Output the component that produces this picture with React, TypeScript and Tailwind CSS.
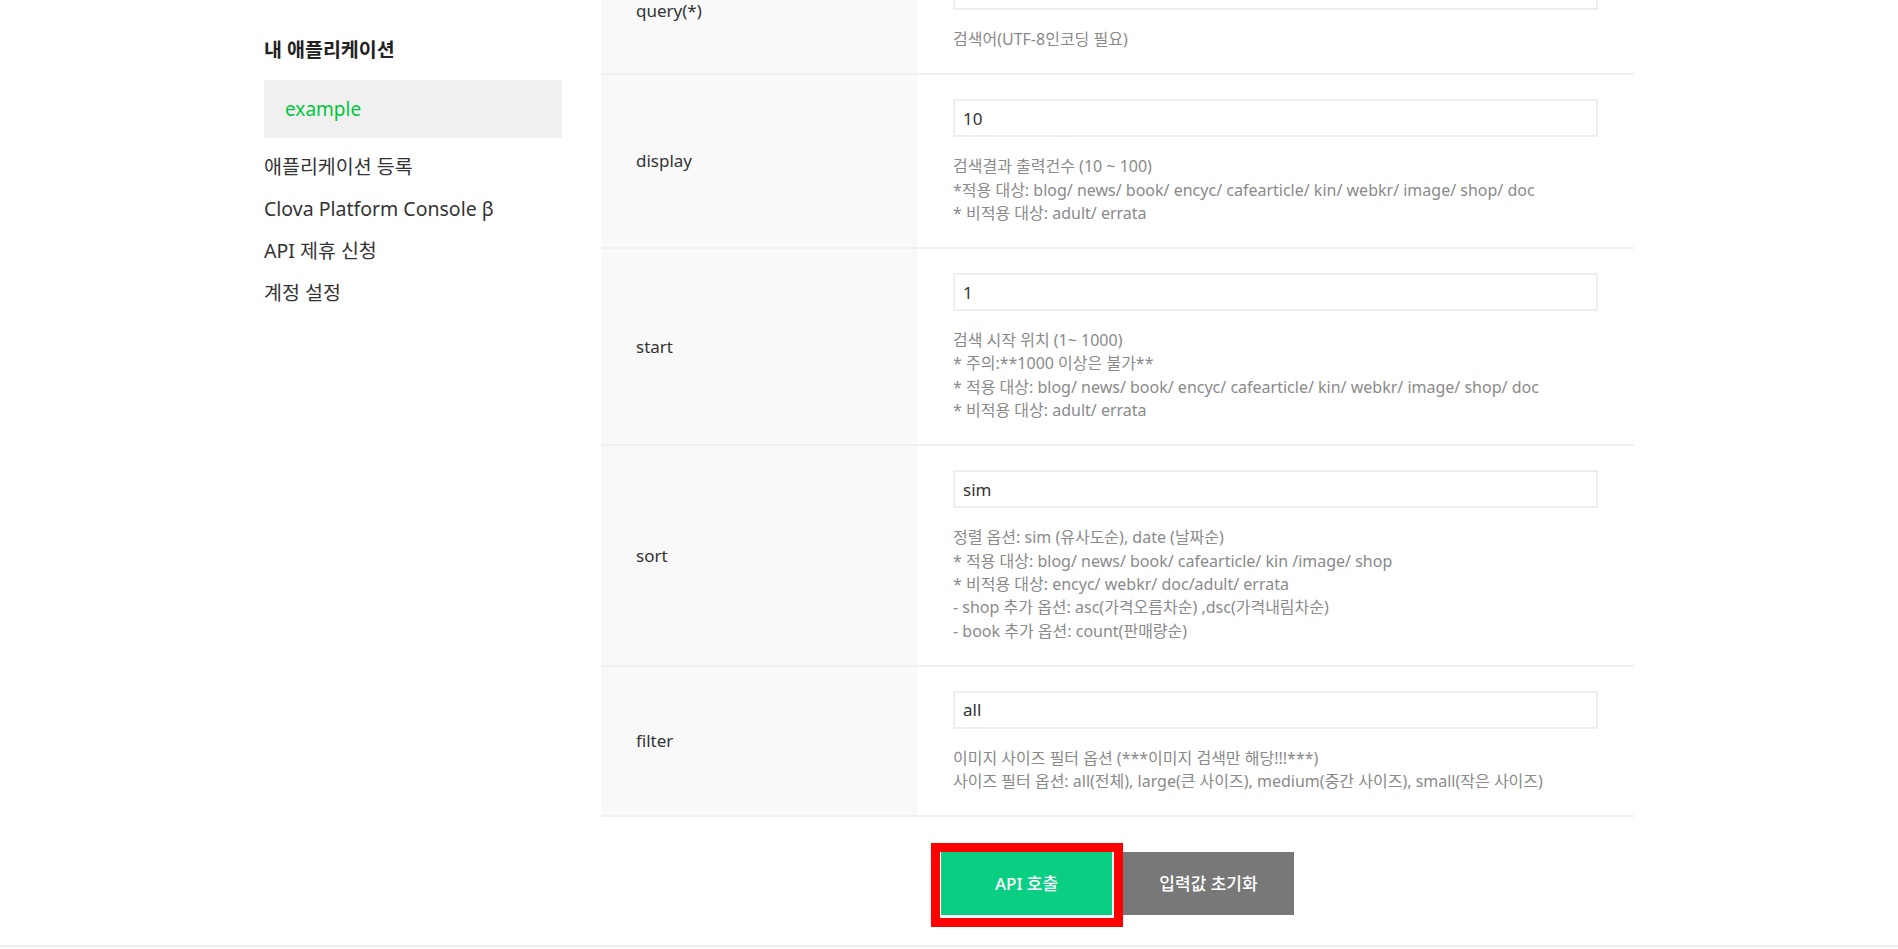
import React from 'react';

const font = "font-['Noto_Sans','Noto_Sans_CJK_KR',sans-serif]";

const menuItems = ['애플리케이션 등록', 'Clova Platform Console β', 'API 제휴 신청', '계정 설정'];

const params = [
  { name: 'query(*)', value: '', desc: ['검색어(UTF-8인코딩 필요)'] },
  {
    name: 'display',
    value: '10',
    desc: [
      '검색결과 출력건수 (10 ~ 100)',
      '*적용 대상: blog/ news/ book/ encyc/ cafearticle/ kin/ webkr/ image/ shop/ doc',
      '* 비적용 대상: adult/ errata',
    ],
  },
  {
    name: 'start',
    value: '1',
    desc: [
      '검색 시작 위치 (1~ 1000)',
      '* 주의:**1000 이상은 불가**',
      '* 적용 대상: blog/ news/ book/ encyc/ cafearticle/ kin/ webkr/ image/ shop/ doc',
      '* 비적용 대상: adult/ errata',
    ],
  },
  {
    name: 'sort',
    value: 'sim',
    desc: [
      '정렬 옵션: sim (유사도순), date (날짜순)',
      '* 적용 대상: blog/ news/ book/ cafearticle/ kin /image/ shop',
      '* 비적용 대상: encyc/ webkr/ doc/adult/ errata',
      '- shop 추가 옵션: asc(가격오름차순) ,dsc(가격내림차순)',
      '- book 추가 옵션: count(판매량순)',
    ],
  },
  {
    name: 'filter',
    value: 'all',
    desc: [
      '이미지 사이즈 필터 옵션 (***이미지 검색만 해당!!!***)',
      '사이즈 필터 옵션: all(전체), large(큰 사이즈), medium(중간 사이즈), small(작은 사이즈)',
    ],
  },
];

const Sidebar = () => (
  <aside className="w-[298px] shrink-0 pt-[37px]">
    <h2 className="text-[19.5px] leading-[26px] font-bold text-[#222]">내 애플리케이션</h2>
    <div className="mt-[17px] h-[58px] bg-[#f0f0f0] flex items-center px-[21px]">
      <span className="text-[19px] text-[#00c73c]">example</span>
    </div>
    <ul className="mt-[8px]">
      {menuItems.map((item) => (
        <li key={item} className="h-[42px] flex items-center text-[19.5px] text-[#333]">
          {item}
        </li>
      ))}
    </ul>
  </aside>
);

const ParamRow = ({ name, value, desc }: { name: string; value: string; desc: string[] }) => (
  <div className="flex border-b-2 border-[#f0f0f0]">
    <div className="w-[316px] shrink-0 bg-[#f9f9f9] flex items-center pl-[35px] text-[17px] text-[#333]">
      {name}
    </div>
    <div className="flex-1 px-9 pt-6 pb-[22px]">
      <input
        readOnly
        value={value}
        className="w-full h-[38px] border-2 border-[#eeeeee] px-[8px] text-[17px] text-[#333] outline-none"
      />
      <div className="mt-[18px] text-[16px] leading-[23.3px] text-[#8a8a8a]">
        {desc.map((line) => (
          <p key={line}>{line}</p>
        ))}
      </div>
    </div>
  </div>
);

export default function App() {
  return (
    <div className={`${font} min-h-screen bg-white overflow-hidden`}>
      <div className="w-[1370px] mx-auto flex gap-[39px]">
        <Sidebar />
        <main className="flex-1 -mt-[52px]">
          <div>
            {params.map((p) => (
              <ParamRow key={p.name} {...p} />
            ))}
          </div>
          <div className="mt-[35px] flex justify-center gap-[11px]">
            <div className="relative">
              <button className="w-[171px] h-[63px] bg-[#0acf83] text-white text-[17px] font-medium">API 호출</button>
              <div className="absolute -left-[10px] -right-[11px] -top-[9px] -bottom-[12px] border-[9px] border-[#ff0000] pointer-events-none" />
            </div>
            <button className="w-[171px] h-[63px] bg-[#787878] text-white text-[17px] font-medium">입력값 초기화</button>
          </div>
        </main>
      </div>
      <footer className="mt-[30px] h-[120px] border-t-2 border-[#efefef] bg-[#fafafa]" />
    </div>
  );
}
